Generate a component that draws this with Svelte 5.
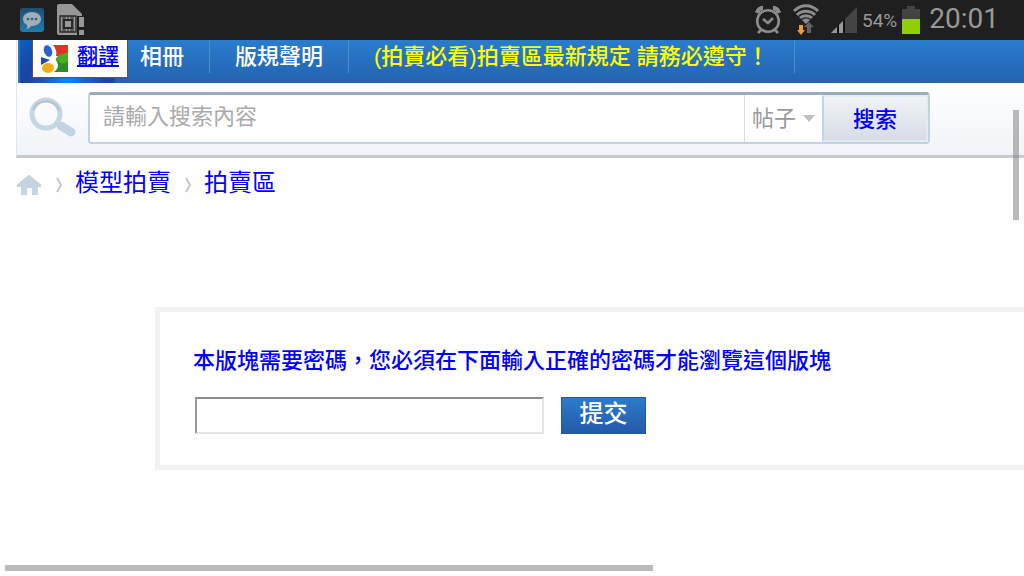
<script>
	const navItems = [
		{ label: '相冊' },
		{ label: '版規聲明' },
		{ label: '(拍賣必看)拍賣區最新規定 請務必遵守！', notice: true }
	];

	const crumbs = ['模型拍賣', '拍賣區'];

	let query = $state('');
	let password = $state('');
</script>

<div class="screen">
	<header class="status-bar">
		<div class="status-group">
			<svg class="chat-icon" width="26" height="26" viewBox="0 0 26 26" aria-hidden="true">
				<defs>
					<linearGradient id="chat" x1="0" y1="0" x2="0" y2="1">
						<stop offset="0" stop-color="#1b5070" />
						<stop offset="1" stop-color="#1f7bb0" />
					</linearGradient>
				</defs>
				<rect x="1" y="1" width="24" height="24" rx="3" fill="url(#chat)" />
				<path d="M13 5c5 0 9 3 9 7s-4 7-9 7l-1 0c-1 2-3 3-5 3 1-1 2-2 1-4-2-1-4-3-4-6 0-4 4-7 9-7z" fill="#a5adb2" />
				<circle cx="9" cy="12" r="1.3" fill="#1e6289" />
				<circle cx="13" cy="12" r="1.3" fill="#1e6289" />
				<circle cx="17" cy="12" r="1.3" fill="#1e6289" />
			</svg>
			<svg width="28" height="32" viewBox="0 0 28 32" aria-hidden="true">
				<path d="M2 0h13l10 10v2h-5v19H2a2 2 0 0 1-2-2V2a2 2 0 0 1 2-2z" fill="#979797" />
				<g fill="none" stroke="#282828">
					<path d="M3 12h16v16H3z" stroke-width="1.4" />
					<path d="M7 16h8v8H7z" stroke-width="2" />
					<path d="M6 12v16M16 12v16M8 12v4M11 12v4M14 12v4M8 24v4M11 24v4M14 24v4" />
				</g>
				<path d="M22 13h5v10h-5zM22 26h5v5h-5z" fill="#979797" />
			</svg>
		</div>

		<div class="status-group right">
			<svg width="28" height="30" viewBox="0 0 28 30" aria-hidden="true">
				<g fill="none" stroke="#8c8c8c">
					<circle cx="14" cy="16" r="10.8" stroke-width="2.6" />
					<path d="M9 14l5 4 5-5" stroke-width="2.6" />
					<path d="M3 8C4 5 6 3 9 3M19 3c3 0 5 2 6 5" stroke-width="4.4" />
					<path d="M7 25l-3 3M21 25l3 3" stroke-width="2.6" />
				</g>
			</svg>
			<svg class="wifi" width="28" height="32" viewBox="0 0 28 32" aria-hidden="true">
				<g fill="none" stroke="#8c8c8c" stroke-width="3">
					<path d="M2 7C9 0 19 0 26 7" />
					<path d="M5 11c5-5 13-5 18 0" />
					<path d="M8 14c3-3 9-3 12 0" />
				</g>
				<path d="M10 16c2-2 6-2 8 0l-4 4z" fill="#8c8c8c" />
				<path d="M7 21h4v5h2l-4 5-4-5h2z" fill="#f49a32" />
				<path d="M15 29v-6h-3l5-5 5 5h-3v6z" fill="#626262" />
			</svg>
			<svg class="signal" width="28" height="28" viewBox="0 0 28 28" aria-hidden="true">
				<path d="M1 27L27 1v26z" fill="#444" />
				<path d="M1 27l6-6v6z" fill="#999" />
				<path d="M7 27v-6l2-2v8zM13 27V15l2-2v14z" fill="#111" />
				<path d="M9 27v-8l4-4v12z" fill="#999" />
			</svg>
			<span class="percent">54%</span>
			<svg width="20" height="30" viewBox="0 0 20 30" aria-hidden="true">
				<path d="M6 1h8v3h5v25H1V4h5z" fill="#444" />
				<path d="M1 14h18v15H1z" fill="#92cf00" />
			</svg>
			<time class="clock">20:01</time>
		</div>
	</header>

	<main>
		<div class="page-head">
			<nav class="nav">
				<div class="active-tab"></div>
				<a class="translate" href="#translate">
					<svg width="28" height="28" viewBox="0 0 28 28" aria-hidden="true">
						<path d="M12 0h15v11H15c1-4 0-7-3-11z" fill="#e0332a" />
						<path d="M27 8v19H13c6-5 4-8 2-12 0-5 8-4 12-7z" fill="#2f8c26" />
						<path d="M15 13c3-4 8-4 12-6v9c-5 4-9 4-12-3z" fill="#4dab22" />
						<ellipse cx="7" cy="6" rx="4" ry="6" fill="#2862cf" transform="rotate(-20 7 6)" />
						<path d="M0 12l9 3-9 5z" fill="#204da8" />
						<ellipse cx="7" cy="23" rx="6" ry="5" fill="#efae16" />
					</svg>
					<span>翻譯</span>
				</a>
				<ul>
					{#each navItems as item}
						<li><a href="#nav" class:notice={item.notice}>{item.label}</a></li>
					{/each}
				</ul>
			</nav>

			<div class="search-bar">
				<svg width="48" height="42" viewBox="0 0 48 42" aria-hidden="true">
					<circle cx="17" cy="17" r="14" fill="none" stroke="#c5d6e4" stroke-width="5" />
					<path d="M4 13A14 14 0 0 1 30 13" fill="none" stroke="#b2c1cd" stroke-width="2" />
					<path d="M32 29l10 6" stroke="#c2d4e4" stroke-width="9" stroke-linecap="round" />
				</svg>
				<form class="search" onsubmit={(e) => e.preventDefault()}>
					<input type="text" aria-label="搜索內容" placeholder="請輸入搜索內容" bind:value={query} />
					<div class="select-wrap">
						<select aria-label="搜索類型">
							<option>帖子</option>
						</select>
						<svg width="12" height="7" viewBox="0 0 12 7" aria-hidden="true">
							<path d="M0 0h12L6 7z" fill="#c0c0c0" />
						</svg>
					</div>
					<button>搜索</button>
				</form>
			</div>
		</div>

		<nav class="crumbs">
			<a href="#home" aria-label="首頁">
				<svg width="26" height="22" viewBox="0 0 26 22" aria-hidden="true">
					<path d="M13 1l12 10v2h-3v8h-6v-7h-5v7H5v-8H1v-2z" fill="#c3d5e4" />
					<path d="M1 12L13 2l12 10" fill="none" stroke="#c9d2d8" stroke-width="2" />
				</svg>
			</a>
			{#each crumbs as crumb}
				<svg class="sep" width="8" height="18" viewBox="0 0 8 18" aria-hidden="true">
					<path d="M2 2l4 7-4 7" fill="none" stroke="#c8c8c8" stroke-width="2" />
				</svg>
				<a href="#forum">{crumb}</a>
			{/each}
		</nav>

		<form class="password-box" onsubmit={(e) => e.preventDefault()}>
			<label for="password">本版塊需要密碼，您必須在下面輸入正確的密碼才能瀏覽這個版塊</label>
			<div class="password-row">
				<input id="password" type="password" bind:value={password} />
				<button>提交</button>
			</div>
		</form>
	</main>

	<div class="scroll-y"></div>
	<div class="scroll-x"></div>
</div>

<style>
	:global(body) {
		background: #fefefe;
		overflow: hidden;
	}

	.screen {
		position: relative;
		min-height: 100vh;
		font-family: 'Liberation Sans', 'Noto Sans CJK TC', sans-serif;
		font-size: 22px;
		color: #00f;
	}

	.screen *,
	.screen {
		box-sizing: border-box;
	}

	a {
		color: inherit;
		text-decoration: none;
	}

	svg {
		display: block;
		flex: none;
	}

	input,
	select,
	button {
		font: inherit;
		margin: 0;
		border-radius: 0;
		outline: none;
	}

	.status-bar {
		display: flex;
		align-items: center;
		justify-content: space-between;
		height: 40px;
		padding: 0 25px 0 19px;
		background: #1f1f1f;
		color: #999;
		font-family: Roboto, sans-serif;
	}

	.status-group {
		display: flex;
		align-items: center;
		gap: 12px;
	}

	.status-group.right {
		gap: 4px;
	}

	.wifi,
	.signal {
		margin-left: 6px;
	}

	.percent {
		font-size: 19px;
	}

	.clock {
		margin-left: 4px;
		font-size: 28px;
		line-height: 38px;
		padding-bottom: 2px;
	}

	.page-head {
		margin-left: 16px;
		border-left: 1px solid #dce8f2;
		border-bottom: 3px solid #c8cacc;
	}

	.nav {
		position: relative;
		display: flex;
		height: 43px;
		margin-left: 1px;
		background: linear-gradient(#2b7ccd, #2263b0);
		color: #fff;
		font-weight: 500;
	}

	.active-tab {
		width: 97px;
		border-left: 2px solid #2b72bf;
		background: radial-gradient(ellipse at 50% 100%, #078df5, #1462c4 30%, #1b42a6 60%, #0b60ba);
	}

	.translate {
		position: absolute;
		top: 0;
		left: 14px;
		display: flex;
		align-items: center;
		gap: 8px;
		height: 38px;
		padding: 0 8px;
		background: #fff;
		border: 1px solid #555;
		border-width: 0 1px 1px;
		color: #00f;
		font-size: 21px;
		line-height: 24px;
		text-decoration: underline;
	}

	.translate span {
		padding-bottom: 6px;
	}

	.nav ul {
		display: flex;
		margin: 0;
		padding: 0;
		list-style: none;
	}

	.nav li {
		height: 33px;
		padding: 0 25px;
		border-right: 1px solid #4d8dcc;
		line-height: 33px;
		white-space: nowrap;
	}

	.notice {
		color: #ff0;
	}

	.search-bar {
		display: flex;
		align-items: center;
		gap: 11px;
		height: 72px;
		padding: 0 94px 2px 12px;
		background: linear-gradient(#fff, #f0f4f8);
	}

	.search {
		display: flex;
		flex: 1;
		height: 52px;
		background: #fff;
		border: 2px solid #bfd3e4;
		border-top: 3px solid #9cabb9;
		border-radius: 4px;
	}

	.search input {
		flex: 1;
		min-width: 0;
		padding: 0 13px 4px;
		border: 0;
		background: transparent;
	}

	.search input::placeholder {
		color: #aaa;
		opacity: 1;
	}

	.select-wrap {
		display: flex;
		align-items: center;
		gap: 6px;
		padding: 0 7px;
		border-left: 1px solid #ddd;
	}

	select {
		padding: 0;
		appearance: none;
		border: 0;
		background: transparent;
		color: #999;
	}

	.search button {
		width: 106px;
		padding: 0 0 4px;
		background: linear-gradient(#f0f4f7, #d7dce4);
		border: 2px solid #e4ebf2;
		border-left: 2px solid #bfd3e4;
		color: #00f;
		font-weight: 500;
	}

	.crumbs {
		display: flex;
		align-items: center;
		height: 54px;
		padding-left: 16px;
		font-size: 24px;
		line-height: 36px;
	}

	.crumbs a {
		padding-bottom: 4px;
	}

	.crumbs a:first-child {
		padding: 0;
	}

	.sep {
		margin: 0 12px 0 13px;
	}

	.password-box {
		margin: 95px 0 0 155px;
		padding: 33px 33px 31px;
		border: 5px solid #f2f2f2;
		border-right: 0;
	}

	.password-box label {
		display: block;
		line-height: 32px;
		font-weight: 500;
		white-space: nowrap;
	}

	.password-row {
		display: flex;
		gap: 17px;
		margin: 20px 0 0 2px;
	}

	.password-row input {
		width: 349px;
		height: 37px;
		padding: 0 6px;
		background: #fff;
		border: 2px solid #e4e4e4;
		border-top-color: #8c8c8c;
		border-left-color: #999;
	}

	.password-row button {
		width: 85px;
		height: 37px;
		padding: 0 0 3px;
		background: linear-gradient(#2d7bcb, #235aa9);
		border: 1px solid #235994;
		color: #fff;
		font-size: 24px;
		font-weight: 500;
		line-height: 24px;
	}

	.scroll-y,
	.scroll-x {
		position: absolute;
		background: rgba(120, 120, 120, 0.5);
	}

	.scroll-y {
		top: 110px;
		right: 5px;
		width: 6px;
		height: 110px;
	}

	.scroll-x {
		left: 5px;
		bottom: 5px;
		width: 63.3%;
		height: 6px;
	}
</style>
